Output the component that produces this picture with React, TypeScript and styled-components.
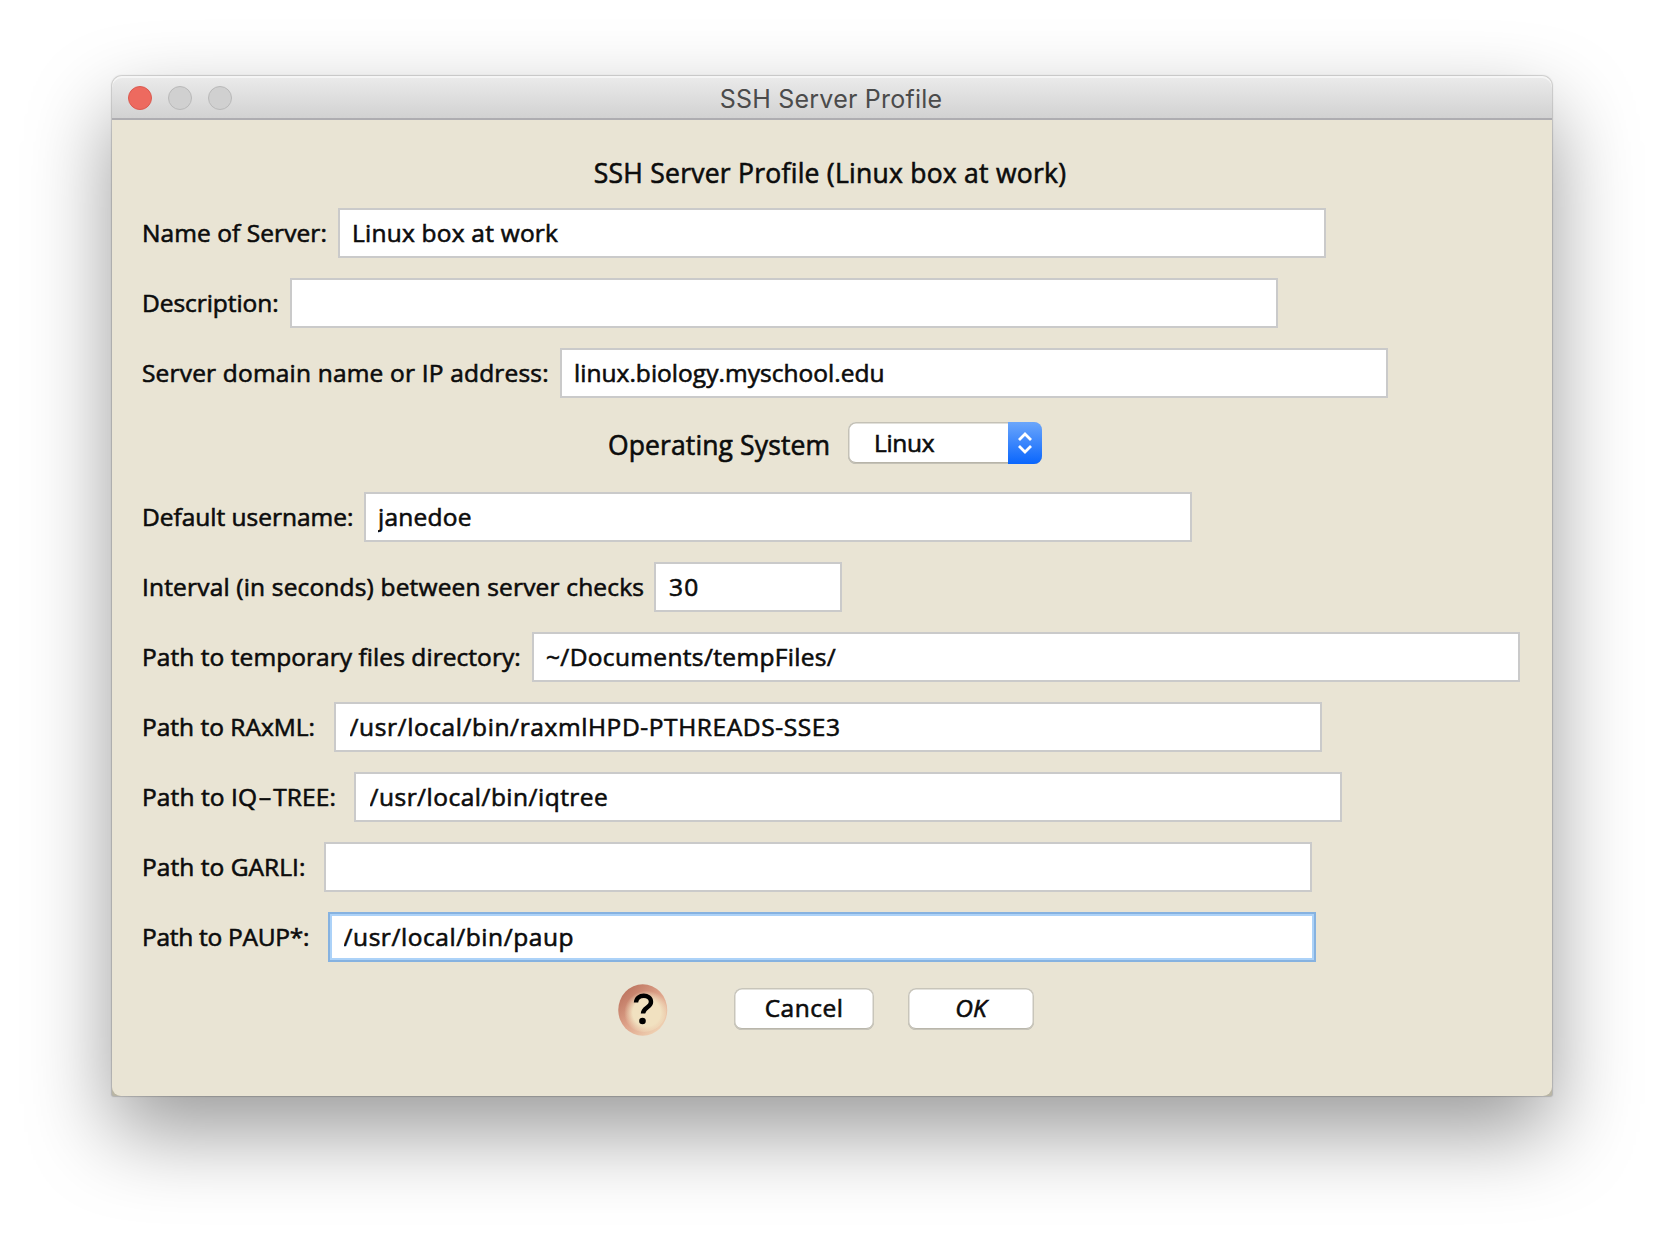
import React from "react";
import styled, { createGlobalStyle, css } from "styled-components";

const GlobalStyle = createGlobalStyle`
  *, *::before, *::after { box-sizing: border-box; }
  body { margin: 0; background: #fff; }
`;

const Desktop = styled.main`
  height: 1244px;
  padding: 76px 112px 0;
  overflow: hidden;
  background: #fff;
`;

const Window = styled.section`
  width: 1440px;
  height: 1020px;
  display: flex;
  flex-direction: column;
  border-radius: 10px 10px 2px 2px;
  background: #b9b5a4;
  box-shadow: 0 0 0 1px rgba(0, 0, 0, 0.1), 0 0 2px 1px rgba(0, 0, 0, 0.07),
    0 36px 84px rgba(0, 0, 0, 0.4);
`;

const TitleBar = styled.header`
  height: 44px;
  flex: none;
  display: grid;
  grid-template-columns: 1fr auto 1fr;
  align-items: center;
  padding: 2px 16px 0;
  border-radius: 10px 10px 0 0;
  border-bottom: 2px solid #aeadb1;
  background: linear-gradient(#ebebeb, #d2d2d2);
  box-shadow: inset 0 2px 0 #f5f5f5;
`;

const Lights = styled.div`
  display: flex;
  gap: 16px;
`;

const Light = styled.span<{ $active?: boolean }>`
  width: 24px;
  height: 24px;
  border-radius: 50%;
  border: 1.5px solid ${(p) => (p.$active ? "#db5a50" : "#b9b9b9")};
  background: ${(p) => (p.$active ? "#ed6a5f" : "#d0d0d0")};
`;

const WindowTitle = styled.h1`
  margin: 2px 2px 0 0;
  font: 400 25px/36px Inter, "Liberation Sans", sans-serif;
  letter-spacing: 0.22px;
  color: #4b4b4b;
`;

const humanist = css`
  font-family: "Open Sans", "Noto Sans", sans-serif;
  font-weight: 400;
  -webkit-text-stroke: 0.6px #0c0c0c;
  color: #0c0c0c;
  white-space: pre;
`;

const Body = styled.form`
  flex: 1;
  display: flex;
  flex-direction: column;
  gap: 20px;
  padding: 0 30px;
  border-radius: 0 0 9px 9px;
  background: #e9e4d4;
`;

const Heading = styled.h2`
  ${humanist}
  height: 68px;
  margin: 0;
  padding: 35px 4px 0 0;
  text-align: center;
  font-size: 26.5px;
  line-height: 36px;
  letter-spacing: 0.25px;
`;

const Row = styled.div`
  display: flex;
  align-items: center;
  height: 50px;
`;

const Label = styled.label<{ $width: number; $spacing: number }>`
  ${humanist}
  flex: none;
  width: ${(p) => p.$width}px;
  font-size: 24.5px;
  line-height: 34px;
  letter-spacing: ${(p) => p.$spacing}px;
`;

const WideHyphen = styled.span`
  display: inline-block;
  margin: 0 4px;
  transform: scaleX(1.7);
`;

const Input = styled.input<{ $width: number; $spacing: number; $inset: number; $focused?: boolean }>`
  ${humanist}
  width: ${(p) => p.$width}px;
  height: 50px;
  padding: 0 11px 2px ${(p) => p.$inset}px;
  border: 2px solid ${(p) => (p.$focused ? "#86b2e0" : "#cacaca")};
  border-radius: 0;
  outline: none;
  background: #fff;
  box-shadow: ${(p) => (p.$focused ? "inset 0 0 0 2px #acd2f8" : "none")};
  font-size: 24.5px;
  letter-spacing: ${(p) => p.$spacing}px;
`;

const SystemRow = styled.div`
  display: flex;
  align-items: center;
  height: 42px;
  margin: 4px 0 8px;
  padding-left: 466px;
`;

const SystemLabel = styled.span`
  ${humanist}
  width: 240px;
  padding-top: 4px;
  font-size: 26.5px;
  line-height: 36px;
  letter-spacing: 0.12px;
`;

const Select = styled.button`
  ${humanist}
  display: flex;
  align-items: stretch;
  width: 194px;
  height: 42px;
  padding: 0;
  border: 0;
  border-radius: 8px;
  overflow: hidden;
  background: #fff;
  box-shadow: inset 0 0 0 1.5px #c4c1b6, inset 0 -2px 0 #aaa79d;
  font-size: 24.5px;
  line-height: 41px;
  text-align: left;
`;

const SelectValue = styled.span`
  flex: 1;
  padding-left: 26px;
  letter-spacing: -0.3px;
`;

const Stepper = styled.span`
  width: 34px;
  display: grid;
  place-items: center;
  background: linear-gradient(#6ba6fb, #0a66fd);
`;

const Actions = styled.div`
  display: flex;
  align-items: center;
  height: 52px;
  margin-top: 1px;
  padding-left: 476px;
`;

const HelpButton = styled.button`
  width: 50px;
  height: 52px;
  margin: 2px 66px 0 0;
  padding: 0;
  border: 0;
  background: none;
`;

const PushButton = styled.button<{ $width: number; $spacing?: number; $italic?: boolean }>`
  ${humanist}
  width: ${(p) => p.$width}px;
  height: 42px;
  margin-right: 34px;
  padding: 0 0 2px;
  border: 0;
  border-radius: 8px;
  background: #fff;
  box-shadow: inset 0 0 0 1.5px #c8c5ba, inset 0 -2px 0 #aaa79d;
  font-size: 24.5px;
  line-height: 40px;
  font-style: ${(p) => (p.$italic ? "italic" : "normal")};
  letter-spacing: ${(p) => p.$spacing ?? 0}px;
`;

interface Field {
  label: string;
  labelWidth: number;
  labelSpacing: number;
  value: string;
  width: number;
  spacing?: number;
  inset?: number;
  focused?: boolean;
}

const connection: Field[] = [
  { label: "Name of Server:", labelWidth: 196, labelSpacing: 0.07, value: "Linux box at work", width: 988, spacing: 0.22 },
  { label: "Description:", labelWidth: 148, labelSpacing: -0.05, value: "", width: 988 },
  { label: "Server domain name or IP address:", labelWidth: 418, labelSpacing: 0.18, value: "linux.biology.myschool.edu", width: 828, spacing: 0.03 },
];

const paths: Field[] = [
  { label: "Default username:", labelWidth: 222, labelSpacing: -0.02, value: "janedoe", width: 828, spacing: 0.25 },
  { label: "Interval (in seconds) between server checks", labelWidth: 512, labelSpacing: 0.17, value: "30", width: 188, spacing: 1.2, inset: 13 },
  { label: "Path to temporary files directory:", labelWidth: 390, labelSpacing: 0.06, value: "~/Documents/tempFiles/", width: 988, spacing: 0.34 },
  { label: "Path to RAxML:", labelWidth: 192, labelSpacing: 0, value: "/usr/local/bin/raxmlHPD-PTHREADS-SSE3", width: 988, spacing: 0.59, inset: 13.5 },
  { label: "Path to IQ-TREE:", labelWidth: 212, labelSpacing: 0.1, value: "/usr/local/bin/iqtree", width: 988, spacing: 0.48, inset: 13.5 },
  { label: "Path to GARLI:", labelWidth: 182, labelSpacing: 0.05, value: "", width: 988 },
  { label: "Path to PAUP*:", labelWidth: 186, labelSpacing: -0.28, value: "/usr/local/bin/paup", width: 988, spacing: 0.56, inset: 13.5, focused: true },
];

function FieldRow({ field }: { field: Field }) {
  const [head, tail] = field.label.split("-");
  return (
    <Row>
      <Label $width={field.labelWidth} $spacing={field.labelSpacing}>
        {head}
        {tail && <><WideHyphen>-</WideHyphen>{tail}</>}
      </Label>
      <Input
        $width={field.width}
        $spacing={field.spacing ?? 0}
        $inset={field.inset ?? 12}
        $focused={field.focused}
        defaultValue={field.value}
        spellCheck={false}
      />
    </Row>
  );
}

function HelpIcon() {
  return (
    <svg width="50" height="52" viewBox="0 0 50 52">
      <defs>
        <linearGradient id="rim" x1="0.15" y1="0.1" x2="0.85" y2="0.9">
          <stop offset="0" stopColor="#bd7560" />
          <stop offset="0.5" stopColor="#dea289" />
          <stop offset="1" stopColor="#f0d3b4" />
        </linearGradient>
        <radialGradient id="bowl" cx="0.56" cy="0.56" r="0.5">
          <stop offset="0.62" stopColor="#f1e1c0" />
          <stop offset="1" stopColor="#f1e1c0" stopOpacity="0" />
        </radialGradient>
      </defs>
      <ellipse cx="24.75" cy="26" rx="24.5" ry="25.750" fill="url(#rim)" />
      <ellipse cx="26" cy="26" rx="22.5" ry="22" fill="url(#bowl)" />
      <path d="M18 18.5C18.5 9.500 33 9.500 33 18C33 23.500 25 23.500 25 29.500" fill="none" stroke="#000" strokeWidth="4.400" />
      <circle cx="24.500" cy="37" r="3.300" />
    </svg>
  );
}

export default function App() {
  return (
    <>
      <GlobalStyle />
      <Desktop>
        <Window>
          <TitleBar>
            <Lights>
              <Light $active />
              <Light />
              <Light />
            </Lights>
            <WindowTitle>SSH Server Profile</WindowTitle>
          </TitleBar>
          <Body>
            <Heading>SSH Server Profile (Linux box at work)</Heading>
            {connection.map((f) => <FieldRow key={f.label} field={f} />)}
            <SystemRow>
              <SystemLabel>Operating System</SystemLabel>
              <Select type="button">
                <SelectValue>Linux</SelectValue>
                <Stepper>
                  <svg width="18" height="24" viewBox="0 0 18 24" fill="none" stroke="#fff" strokeWidth="2.800">
                    <path d="M3 9L9 3L15 9M3 15L9 21L15 15" />
                  </svg>
                </Stepper>
              </Select>
            </SystemRow>
            {paths.map((f) => <FieldRow key={f.label} field={f} />)}
            <Actions>
              <HelpButton type="button" aria-label="Help"><HelpIcon /></HelpButton>
              <PushButton type="button" $width={140} $spacing={0.5}>Cancel</PushButton>
              <PushButton type="button" $width={126} $italic>OK</PushButton>
            </Actions>
          </Body>
        </Window>
      </Desktop>
    </>
  );
}
